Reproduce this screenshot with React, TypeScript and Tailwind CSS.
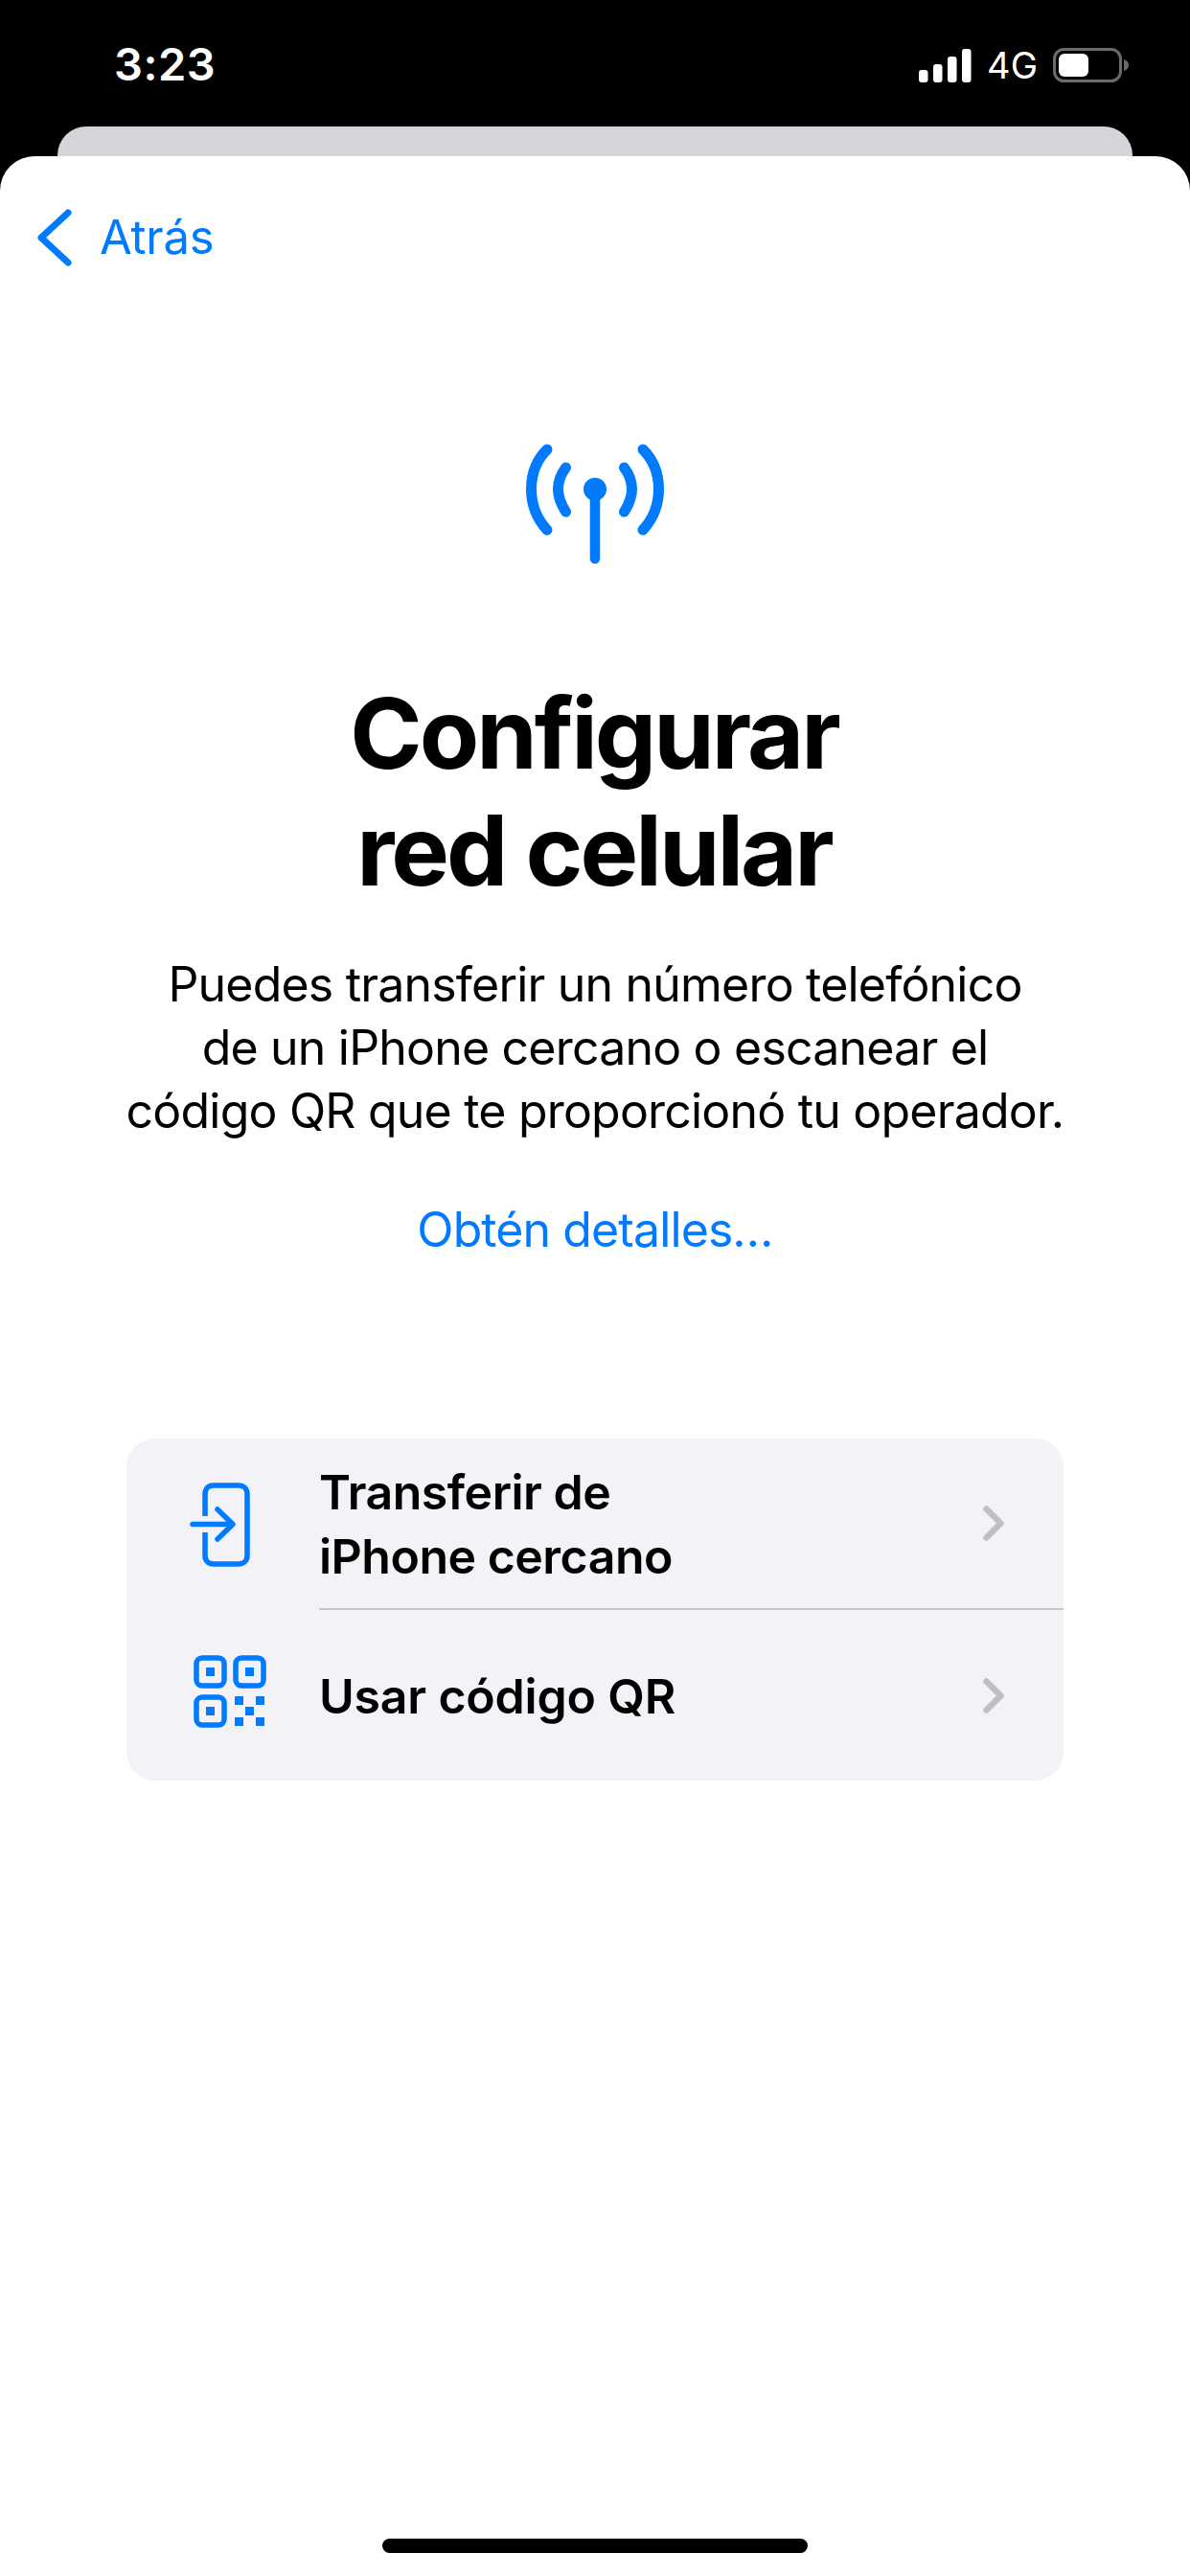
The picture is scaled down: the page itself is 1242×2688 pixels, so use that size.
function Signal() {
  return (
    <svg width="55" height="35" viewBox="0 0 55 35" className="block">
      <rect x="0" y="22" width="9.5" height="13" rx="3" fill="#fff" />
      <rect x="15" y="16" width="9.5" height="19" rx="3" fill="#fff" />
      <rect x="30" y="8" width="9.5" height="27" rx="3" fill="#fff" />
      <rect x="45" y="0" width="9.5" height="35" rx="3" fill="#fff" />
    </svg>
  )
}

function Battery() {
  return (
    <svg width="79" height="36" viewBox="0 0 79 36" className="block">
      <rect x="1.5" y="1.5" width="69" height="33" rx="10" fill="none" stroke="#6b6b6b" strokeWidth="3" />
      <rect x="6" y="6" width="31" height="24" rx="6" fill="#fff" />
      <path d="M74 12c3 1 5 3 5 6s-2 5-5 6z" fill="#6b6b6b" />
    </svg>
  )
}

function Antenna() {
  return (
    <svg width="144" height="126" viewBox="0 0 144 126" fill="none" stroke="#007aff" strokeLinecap="round" className="block">
      <circle cx="72" cy="47.5" r="12" fill="#007aff" stroke="none" />
      <path d="M72 50V120" strokeWidth="10.5" />
      <path d="M22 6C11 17 5.5 31 5.5 47.5C5.5 64 11 78 22 90" strokeWidth="11" />
      <path d="M122 6C133 17 138.5 31 138.5 47.5C138.5 64 133 78 122 90" strokeWidth="11" />
      <path d="M41.5 25C37 31 33.5 38 33.5 47.5C33.5 57 37 64 41.5 71" strokeWidth="11" />
      <path d="M102.5 25C107 31 110.5 38 110.5 47.5C110.5 57 107 64 102.5 71" strokeWidth="11" />
    </svg>
  )
}

function TransferIcon() {
  return (
    <svg width="66" height="88" viewBox="0 0 66 88" fill="none" stroke="#007aff" className="block">
      <path d="M16 35V12C16 6.5 19.5 3 25 3H51C56.5 3 60 6.5 60 12V76C60 81.5 56.5 85 51 85H25C19.5 85 16 81.5 16 76V52" strokeWidth="5.5" />
      <path d="M3 43.5H42" strokeWidth="5.5" strokeLinecap="round" />
      <path d="M29 28L45 43.5L29 59" strokeWidth="5.5" strokeLinecap="round" strokeLinejoin="round" />
    </svg>
  )
}

function QrIcon() {
  return (
    <svg width="76" height="76" viewBox="0 0 76 76" fill="#007aff" className="block">
      <g fill="none" stroke="#007aff" strokeWidth="5.5">
        <rect x="3" y="3" width="29" height="29" rx="6" />
        <rect x="44" y="3" width="29" height="29" rx="6" />
        <rect x="3" y="44" width="29" height="29" rx="6" />
      </g>
      <rect x="13" y="13" width="9" height="9" />
      <rect x="54" y="13" width="9" height="9" />
      <rect x="13" y="54" width="9" height="9" />
      <rect x="43" y="43" width="9" height="9" />
      <rect x="65" y="43" width="9" height="9" />
      <rect x="54" y="54" width="9" height="9" />
      <rect x="43" y="65" width="9" height="9" />
      <rect x="65" y="65" width="9" height="9" />
    </svg>
  )
}

function Chevron() {
  return (
    <svg width="22" height="37" viewBox="0 0 22 37" fill="none" stroke="#bfbfc4" strokeWidth="6.5" strokeLinecap="round" strokeLinejoin="round" className="block">
      <path d="M3.5 3.5L18.5 18.5L3.5 33.5" />
    </svg>
  )
}

export default function App() {
  return (
    <div className="w-[1242px] h-[2688px] bg-black flex flex-col overflow-hidden font-['Inter',sans-serif]">
      {/* status bar */}
      <div className="h-[132px] shrink-0 flex justify-between pl-[119px] pr-[64px] pt-[42px]">
        <span className="text-[47px] leading-[50px] font-semibold text-white tracking-[0.5px]">3:23</span>
        <div className="flex items-center gap-[16px] h-[50px] pt-[2px]">
          <Signal />
          <span className="text-[38px] leading-[40px] font-normal text-white">4G</span>
          <Battery />
        </div>
      </div>

      <div className="h-[31px] shrink-0 mx-[60px] bg-[#d4d4d9] rounded-t-[30px]" />

      <div className="flex-1 bg-white rounded-t-[36px] flex flex-col items-center relative">
        <div className="self-stretch flex items-start gap-[28px] pl-[38px] pt-[55px] h-[112px]">
          <svg width="38" height="60" viewBox="0 0 38 60" fill="none" stroke="#007aff" strokeWidth="7" strokeLinecap="round" strokeLinejoin="round" className="block">
            <path d="M33 4L5 30L33 56" />
          </svg>
          <span className="text-[49px] leading-[60px] text-[#007aff] tracking-[-0.3px]">Atrás</span>
        </div>

        <div className="mt-[188px]">
          <Antenna />
        </div>

        <h1 className="mt-[115px] pr-[2px] text-[102px] leading-[122px] font-bold text-black text-center tracking-[-3px]">
          Configurar<br />red celular
        </h1>

        <p className="mt-[46px] text-[50px] leading-[66px] text-black text-center tracking-[-0.8px]">
          Puedes transferir un número telefónico<br />
          de un iPhone cercano o escanear el<br />
          código QR que te proporcionó tu operador.
        </p>

        <div className="mt-[58px] text-[50px] leading-[67px] text-[#007aff] tracking-[-0.9px]">Obtén detalles…</div>

        <div className="mt-[184px] w-[978px] bg-[#f2f2f7] rounded-[30px] flex flex-col">
          <div className="h-[179px] flex items-center pl-[66px]">
            <div className="w-[135px] shrink-0"><TransferIcon /></div>
            <div className="flex-1 h-full flex items-center pr-[62px] border-b-2 border-[#c6c6c8]">
              <span className="flex-1 text-[50px] leading-[67px] font-semibold text-black tracking-[-0.5px] pt-[2px]">Transferir de<br />iPhone cercano</span>
              <Chevron />
            </div>
          </div>
          <div className="h-[178px] flex items-center pl-[70px]">
            <div className="w-[131px] shrink-0 mb-[8px]"><QrIcon /></div>
            <div className="flex-1 flex items-center pr-[62px]">
              <span className="flex-1 text-[50px] leading-[67px] font-semibold text-black tracking-[-0.2px] pt-[2px]">Usar código QR</span>
              <Chevron />
            </div>
          </div>
        </div>

        <div className="absolute bottom-[24px] left-[399px] w-[444px] h-[15px] rounded-full bg-black" />
      </div>
    </div>
  )
}
